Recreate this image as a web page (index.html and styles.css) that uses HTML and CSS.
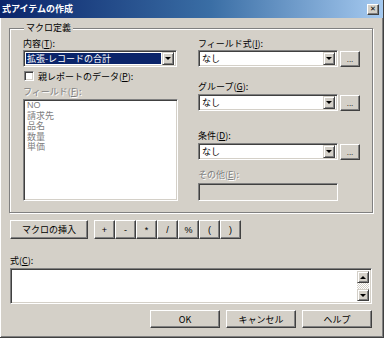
FILE: index.html
```html
<!DOCTYPE html>
<html lang="ja">
<head>
    <meta charset="UTF-8">
    <title>式アイテムの作成</title>
    <link rel="stylesheet" href="styles.css">
</head>
<body>
<div class="window">
    <div class="titlebar">
        <span class="title">式アイテムの作成</span>
        <span class="close">&#x2715;</span>
    </div>
    <div class="client">
        <fieldset class="group">
            <legend>マクロ定義</legend>
            <div class="cols">
                <div class="col-left">
                    <div class="label">内容(<u>T</u>):</div>
                    <div class="combo">
                        <span class="combo-text selected">拡張-レコードの合計</span>
                        <span class="drop"></span>
                    </div>
                    <div class="check">
                        <span class="checkbox"></span>
                        <span>親レポートのデータ(<u>P</u>):</span>
                    </div>
                    <div class="label disabled label-list">フィールド(<u>F</u>):</div>
                    <div class="listbox">
                        <div>NO</div>
                        <div>請求先</div>
                        <div>品名</div>
                        <div>数量</div>
                        <div>単価</div>
                    </div>
                </div>
                <div class="col-right">
                    <div class="label">フィールド式(<u>I</u>):</div>
                    <div class="combo-row">
                        <div class="combo"><span class="combo-text">なし</span><span class="drop"></span></div>
                        <span class="btn dots">...</span>
                    </div>
                    <div class="label label-group">グループ(<u>G</u>):</div>
                    <div class="combo-row spaced">
                        <div class="combo"><span class="combo-text">なし</span><span class="drop"></span></div>
                        <span class="btn dots">...</span>
                    </div>
                    <div class="label label-cond">条件(<u>D</u>):</div>
                    <div class="combo-row spaced">
                        <div class="combo"><span class="combo-text">なし</span><span class="drop"></span></div>
                        <span class="btn dots">...</span>
                    </div>
                    <div class="label disabled label-other">その他(<u>E</u>):</div>
                    <div class="textbox off"></div>
                </div>
            </div>
        </fieldset>

        <div class="tools">
            <span class="btn macro">マクロの挿入</span>
            <div class="ops">
                <span class="btn op">+</span>
                <span class="btn op">-</span>
                <span class="btn op">*</span>
                <span class="btn op">/</span>
                <span class="btn op">%</span>
                <span class="btn op">(</span>
                <span class="btn op">)</span>
            </div>
        </div>

        <div class="label label-expr">式(<u>C</u>):</div>
        <div class="expr">
            <div class="expr-area"></div>
            <div class="scrollbar">
                <span class="sb-btn"><span class="arrow up"></span></span>
                <span class="sb-track"></span>
                <span class="sb-btn"><span class="arrow down"></span></span>
            </div>
        </div>

        <div class="actions">
            <span class="btn action">OK</span>
            <span class="btn action">キャンセル</span>
            <span class="btn action">ヘルプ</span>
        </div>
    </div>
</div>
</body>
</html>
```

FILE: styles.css
```css
body {
    margin: 0;
    font-family: "Noto Sans CJK JP", "Liberation Sans", sans-serif;
    font-size: 9px;
    color: #000;
}

.window {
    width: 383px;
    height: 337px;
    background-color: #d4d0c8;
    border-right: 1px solid #404040;
    border-bottom: 1px solid #404040;
    box-shadow: inset 1px 0 #ffffff, inset -1px -1px #808080;
}

.titlebar {
    height: 18px;
    display: flex;
    align-items: center;
    justify-content: space-between;
    padding: 0 4px 0 2px;
    background: linear-gradient(to right, #0a246a, #3a6ea5 55%, #a6caf0);
}

.title {
    color: #fff;
    font-weight: bold;
    font-size: 9px;
    line-height: 12px;
}

.close {
    width: 12px;
    height: 11px;
    background-color: #d4d0c8;
    box-sizing: border-box;
    border: 1px solid;
    border-color: #fff #404040 #404040 #fff;
    box-shadow: inset -1px -1px #808080;
    font-size: 7px;
    font-weight: bold;
    line-height: 9px;
    text-align: center;
    font-family: "DejaVu Sans", sans-serif;
}

.client {
    padding: 4px 11px 0 9px;
}

/* group box with etched border */
.group {
    margin: 0;
    padding: 4px 12px 11px 13px;
    border: 1px solid #808080;
    box-shadow: inset 1px 1px #fff, 1px 1px #fff;
}

.group legend {
    padding: 0 2px;
    margin-left: 1px;
    line-height: 12px;
    background-color: #d4d0c8;
}

.cols {
    display: flex;
    gap: 20px;
}

.col-left {
    width: 155px;
}

.col-right {
    width: 162px;
}

.label {
    line-height: 12px;
    white-space: nowrap;
}

.disabled {
    color: #808080;
    text-shadow: 1px 1px 0 #fff;
}

.label-list { margin-top: 3px; }
.label-group { margin-top: 14px; }
.label-cond { margin-top: 19px; }
.label-other { margin-top: 9px; }
.label-expr { margin-top: 16px; padding-left: 1px; }

/* sunken fields */
.combo, .listbox, .textbox, .checkbox, .expr {
    box-sizing: border-box;
    border: 1px solid;
    border-color: #808080 #fff #fff #808080;
    box-shadow: inset 1px 1px #404040, inset -1px -1px #d4d0c8;
    background-color: #fff;
}

.combo {
    height: 17px;
    display: flex;
    align-items: center;
    padding: 2px;
}

.col-left .combo {
    width: 154px;
}

.combo-text {
    flex: 1;
    line-height: 11px;
    padding-left: 1px;
    white-space: nowrap;
}

.combo-text.selected {
    background-color: #0a246a;
    color: #fff;
    margin-right: 1px;
}

.drop {
    width: 12px;
    height: 13px;
    box-sizing: border-box;
    background-color: #d4d0c8;
    border: 1px solid;
    border-color: #d4d0c8 #404040 #404040 #d4d0c8;
    box-shadow: inset 1px 1px #fff, inset -1px -1px #808080;
    display: flex;
    align-items: center;
    justify-content: center;
}

.drop::after {
    content: "";
    border-left: 3px solid transparent;
    border-right: 3px solid transparent;
    border-top: 3px solid #000;
}

.combo-row {
    display: flex;
    align-items: center;
    gap: 2px;
}

.combo-row.spaced {
    margin-top: 1px;
}

.combo-row .combo {
    width: 140px;
}

.check {
    display: flex;
    align-items: center;
    gap: 4px;
    height: 14px;
    margin-top: 2px;
    padding-left: 1px;
    white-space: nowrap;
}

.checkbox {
    width: 10px;
    height: 10px;
}

.listbox {
    height: 102px;
    margin-top: 1px;
    padding: 0 3px;
    color: #808080;
    font-family: "Liberation Sans", "Noto Sans CJK JP", sans-serif;
    line-height: 10.5px;
}

.textbox {
    height: 18px;
    width: 140px;
    margin-top: 2px;
}

.textbox.off {
    background-color: #d4d0c8;
}

/* raised buttons */
.btn {
    box-sizing: border-box;
    display: flex;
    align-items: center;
    justify-content: center;
    background-color: #d4d0c8;
    border: 1px solid;
    border-color: #fff #404040 #404040 #fff;
    box-shadow: inset -1px -1px #808080;
    white-space: nowrap;
}

.dots {
    width: 20px;
    height: 16px;
    font-size: 8px;
    line-height: 10px;
    padding-top: 2px;
    font-family: "Liberation Sans", sans-serif;
}

.tools {
    display: flex;
    gap: 6px;
    margin-top: 7px;
    padding-left: 1px;
}

.macro {
    width: 78px;
    height: 19px;
}

.ops {
    display: flex;
}

.op {
    width: 21px;
    height: 19px;
    font-family: "Liberation Sans", sans-serif;
}

.expr {
    display: flex;
    height: 36px;
    margin-top: 1px;
    margin-left: 1px;
    padding: 2px;
}

.expr-area {
    flex: 1;
}

.scrollbar {
    width: 12px;
    display: flex;
    flex-direction: column;
}

.sb-btn {
    height: 12px;
    box-sizing: border-box;
    background-color: #d4d0c8;
    border: 1px solid;
    border-color: #d4d0c8 #404040 #404040 #d4d0c8;
    box-shadow: inset 1px 1px #fff, inset -1px -1px #808080;
    display: flex;
    align-items: center;
    justify-content: center;
}

.sb-track {
    flex: 1;
    background: repeating-conic-gradient(#fff 0 25%, #d4d0c8 0 50%) 0 0 / 2px 2px;
}

.arrow {
    border-left: 3px solid transparent;
    border-right: 3px solid transparent;
}

.arrow.up { border-bottom: 3px solid #000; }
.arrow.down { border-top: 3px solid #000; }

.actions {
    display: flex;
    justify-content: flex-end;
    gap: 6px;
    margin-top: 6px;
}

.action {
    width: 70px;
    height: 18px;
}
```
